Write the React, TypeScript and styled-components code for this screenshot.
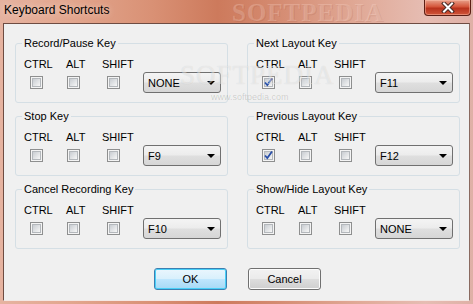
import React from "react";
import styled, { createGlobalStyle } from "styled-components";

const GlobalStyle = createGlobalStyle`
  html, body {
    margin: 0;
    padding: 0;
    background: #ffffff;
  }
`;

const Window = styled.div`
  position: relative;
  width: 473px;
  height: 304px;
  display: flex;
  flex-direction: column;
  overflow: hidden;
  font-family: "Liberation Sans", Arial, sans-serif;
  background: linear-gradient(
    90deg,
    #e6b3a0 0%,
    #e2a68e 15%,
    #d99175 32%,
    #cd7a5c 46%,
    #d48a70 58%,
    #e0a895 75%,
    #e6bdb3 90%,
    #dfb0a6 100%
  );
`;

const TitleBar = styled.div`
  height: 23px;
  display: flex;
  align-items: flex-start;
  justify-content: space-between;
  padding-left: 4px;
  flex-shrink: 0;
`;

const Title = styled.span`
  margin-top: 3px;
  font-size: 12px;
  line-height: 15px;
  color: #000;
  text-shadow: 0 0 6px rgba(255, 240, 230, 0.7);
`;

const CloseButton = styled.div`
  width: 45px;
  height: 15px;
  margin-right: 2px;
  border: 1px solid #5b1e14;
  border-top: none;
  border-radius: 0 0 4px 4px;
  background: linear-gradient(180deg, #e8a08a 0%, #d4553a 45%, #b8321c 55%, #d0563a 100%);
  box-shadow: inset 0 0 0 1px rgba(255, 200, 180, 0.45);
  display: flex;
  align-items: center;
  justify-content: center;
`;

const Client = styled.div`
  flex: 1;
  margin: 0 3px 3px 3px;
  border: 1px solid #6e4c42;
  border-bottom-color: #f4e8e4;
  border-right-color: #8a6a60;
  background: #f0f0f0;
  padding: 13px 9px 0 11px;
  display: flex;
  flex-direction: column;
`;

const GroupGrid = styled.div`
  display: grid;
  grid-template-columns: 213px 213px;
  column-gap: 19px;
  row-gap: 7px;
`;

const Group = styled.fieldset`
  box-sizing: border-box;
  height: 66px;
  margin: 0;
  padding: 0 0 0 6px;
  min-width: 0;
  border: 1px solid #d5dfe5;
  border-radius: 3px;
`;

const Legend = styled.legend`
  padding: 0 2px;
  font-size: 11px;
  line-height: 12px;
  color: #000;
`;

const KeyRow = styled.div`
  display: flex;
  align-items: flex-start;
  padding: 11px 0 0 2px;
`;

const KeyColumn = styled.div<{ $width: number }>`
  width: ${(p) => p.$width}px;
  flex-shrink: 0;
  display: flex;
  flex-direction: column;
  align-items: flex-start;
`;

const KeyLabel = styled.span`
  font-size: 11px;
  line-height: 9px;
  height: 9px;
  color: #000;
`;

const Box = styled.span<{ $offset: number }>`
  box-sizing: border-box;
  flex-shrink: 0;
  width: 13px;
  height: 13px;
  margin: 7px 0 0 ${(p) => p.$offset}px;
  border: 1px solid #8e8f8f;
  background: #f4f4f4;
  padding: 1px;
  display: flex;
`;

const BoxInner = styled.span`
  box-sizing: border-box;
  width: 9px;
  height: 9px;
  border: 1px solid #b4b8bc;
  background: linear-gradient(135deg, #c9cdd2 0%, #e2e4e6 55%, #f7f7f7 100%);
  position: relative;
`;

const CheckMark = styled.svg`
  position: absolute;
  left: -2px;
  top: -2px;
`;

const Select = styled.div`
  box-sizing: border-box;
  width: 78px;
  height: 21px;
  margin-top: 12px;
  border: 1px solid #707070;
  border-radius: 3px;
  background: linear-gradient(180deg, #f4f4f4 0%, #ececec 48%, #dfdfdf 52%, #d6d6d6 100%);
  display: flex;
  align-items: center;
  justify-content: space-between;
  padding: 0 5px 0 4px;
  font-size: 11px;
  color: #000;
`;

const Arrow = styled.span`
  width: 0;
  height: 0;
  border-left: 4px solid transparent;
  border-right: 4px solid transparent;
  border-top: 4px solid #000;
`;

const ButtonRow = styled.div`
  display: flex;
  justify-content: center;
  gap: 21px;
  margin-top: 19px;
`;

const Button = styled.div<{ $default?: boolean }>`
  box-sizing: border-box;
  width: 73px;
  height: 22px;
  border: 1px solid ${(p) => (p.$default ? "#3c7fb1" : "#707070")};
  border-radius: 3px;
  background: ${(p) =>
    p.$default
      ? "linear-gradient(180deg, #eaf6fd 0%, #d9f0fc 48%, #bee6fd 52%, #a7d9f5 100%)"
      : "linear-gradient(180deg, #f2f2f2 0%, #ebebeb 48%, #dddddd 52%, #cfcfcf 100%)"};
  box-shadow: inset 0 0 0 1px ${(p) => (p.$default ? "#48d0f8" : "#fcfcfc")};
  display: flex;
  align-items: center;
  justify-content: center;
  font-size: 11px;
  color: #000;
`;

const TitleWatermark = styled.span`
  position: absolute;
  left: 232px;
  top: -1px;
  font-family: "Liberation Serif", serif;
  font-weight: bold;
  font-size: 25px;
  letter-spacing: 1px;
  color: rgba(255, 225, 215, 0.25);
  text-shadow: 1px 1px 0 rgba(150, 70, 50, 0.15);
  pointer-events: none;
`;

const ClientWatermark = styled.span`
  position: absolute;
  left: 180px;
  top: 60px;
  font-family: "Liberation Serif", serif;
  font-size: 27px;
  letter-spacing: 1px;
  color: rgba(255, 255, 255, 0.45);
  text-shadow: 0 0 1px rgba(0, 0, 0, 0.12);
  pointer-events: none;
`;

const UrlWatermark = styled.span`
  position: absolute;
  left: 211px;
  top: 92px;
  font-size: 9px;
  color: rgba(0, 0, 0, 0.16);
  pointer-events: none;
`;

type Shortcut = {
  title: string;
  ctrl: boolean;
  alt: boolean;
  shift: boolean;
  key: string;
};

const shortcuts: Shortcut[] = [
  { title: "Record/Pause Key", ctrl: false, alt: false, shift: false, key: "NONE" },
  { title: "Next Layout Key", ctrl: true, alt: false, shift: false, key: "F11" },
  { title: "Stop Key", ctrl: false, alt: false, shift: false, key: "F9" },
  { title: "Previous Layout Key", ctrl: true, alt: false, shift: false, key: "F12" },
  { title: "Cancel Recording Key", ctrl: false, alt: false, shift: false, key: "F10" },
  { title: "Show/Hide Layout Key", ctrl: false, alt: false, shift: false, key: "NONE" },
];

const Checkbox: React.FC<{ checked: boolean; offset: number }> = ({ checked, offset }) => (
  <Box $offset={offset}>
    <BoxInner>
      {checked && (
        <CheckMark width="11" height="11" viewBox="0 0 11 11">
          <path d="M2 5.5 L4.3 8 L9 1.5" fill="none" stroke="#2a4fa8" strokeWidth="1.8" />
        </CheckMark>
      )}
    </BoxInner>
  </Box>
);

const ShortcutGroup: React.FC<{ item: Shortcut }> = ({ item }) => (
  <Group>
    <Legend>{item.title}</Legend>
    <KeyRow>
      <KeyColumn $width={42}>
        <KeyLabel>CTRL</KeyLabel>
        <Checkbox checked={item.ctrl} offset={6} />
      </KeyColumn>
      <KeyColumn $width={36}>
        <KeyLabel>ALT</KeyLabel>
        <Checkbox checked={item.alt} offset={1} />
      </KeyColumn>
      <KeyColumn $width={41}>
        <KeyLabel>SHIFT</KeyLabel>
        <Checkbox checked={item.shift} offset={5} />
      </KeyColumn>
      <Select>
        <span>{item.key}</span>
        <Arrow />
      </Select>
    </KeyRow>
  </Group>
);

const App: React.FC = () => (
  <>
    <GlobalStyle />
    <Window>
      <TitleBar>
        <Title>Keyboard Shortcuts</Title>
        <CloseButton>
          <svg width="14" height="11" viewBox="0 0 14 11">
            <path
              d="M3 1.5 L11 9.5 M11 1.5 L3 9.5"
              stroke="#4a2a24"
              strokeWidth="4"
              strokeLinecap="square"
            />
            <path
              d="M3 1.5 L11 9.5 M11 1.5 L3 9.5"
              stroke="#ffffff"
              strokeWidth="2"
              strokeLinecap="square"
            />
          </svg>
        </CloseButton>
      </TitleBar>
      <TitleWatermark>SOFTPEDIA</TitleWatermark>
      <Client>
        <GroupGrid>
          {shortcuts.map((item) => (
            <ShortcutGroup key={item.title} item={item} />
          ))}
        </GroupGrid>
        <ButtonRow>
          <Button $default>OK</Button>
          <Button>Cancel</Button>
        </ButtonRow>
      </Client>
      <ClientWatermark>SOFTPEDIA</ClientWatermark>
      <UrlWatermark>www.softpedia.com</UrlWatermark>
    </Window>
  </>
);

export default App;
